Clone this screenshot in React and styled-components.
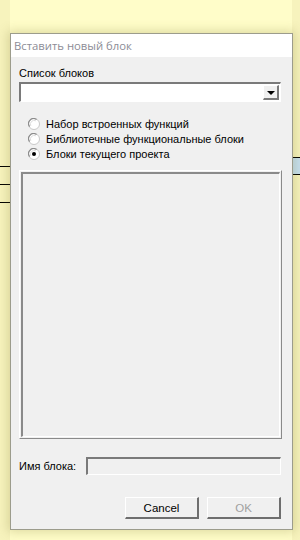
import React, { useState } from "react";
import styled, { createGlobalStyle } from "styled-components";

const GlobalStyle = createGlobalStyle`
  html, body {
    margin: 0;
    padding: 0;
  }
  body {
    width: 300px;
    height: 540px;
    overflow: hidden;
    font-family: "Liberation Sans", Arial, sans-serif;
  }
`;

const options = [
  "Набор встроенных функций",
  "Библиотечные функциональные блоки",
  "Блоки текущего проекта",
];

function Radio({ checked }) {
  return (
    <svg width="12" height="12" viewBox="0 0 12 12">
      <circle cx="6" cy="6" r="5.5" fill="#fff" stroke="#c8c8c8" strokeWidth="1" />
      <path d="M1.6 8.6 A5 5 0 0 1 8.6 1.6" fill="none" stroke="#8c8c8c" strokeWidth="1.2" />
      <path d="M2.8 7.9 A3.8 3.8 0 0 1 7.9 2.8" fill="none" stroke="#dcdcdc" strokeWidth="1" />
      {checked && <circle cx="6" cy="6" r="2" fill="#000" />}
    </svg>
  );
}

function App() {
  const [choice, setChoice] = useState(2);

  return (
    <>
      <GlobalStyle />
      <S.Page>
        <S.LeftStrip>
          <S.Rule />
          <S.Rule />
          <S.Rule />
        </S.LeftStrip>
        <S.RightStrip>
          <S.Band />
        </S.RightStrip>

        <S.Dialog>
          <S.TitleBar>Вставить новый блок</S.TitleBar>
          <S.Body>
            <S.Label>Список блоков</S.Label>
            <S.Combo>
              <S.ComboField />
              <S.ComboButton>
                <S.Arrow />
              </S.ComboButton>
            </S.Combo>

            <S.RadioGroup>
              {options.map((text, i) => (
                <S.RadioRow key={text} onClick={() => setChoice(i)}>
                  <Radio checked={choice === i} />
                  <span>{text}</span>
                </S.RadioRow>
              ))}
            </S.RadioGroup>

            <S.ListBox>
              <S.ListInner />
            </S.ListBox>

            <S.NameRow>
              <S.Label>Имя блока:</S.Label>
              <S.NameInput />
            </S.NameRow>

            <S.Buttons>
              <S.Button>Cancel</S.Button>
              <S.Button disabled>OK</S.Button>
            </S.Buttons>
          </S.Body>
        </S.Dialog>
      </S.Page>
    </>
  );
}

const S = {
  Page: styled.div`
    position: relative;
    width: 300px;
    height: 540px;
    background: #fffdc9;
    display: flex;
    justify-content: space-between;
  `,
  LeftStrip: styled.div`
    width: 10px;
    background: #f7f3bd;
    padding-top: 166px;
    display: flex;
    flex-direction: column;
    gap: 17px;
  `,
  Rule: styled.div`
    height: 1px;
    background: #000;
  `,
  RightStrip: styled.div`
    width: 8px;
    background: #f7f3bd;
    padding-top: 157px;
  `,
  Band: styled.div`
    height: 16px;
    background: #c6dfef;
    border-top: 1px solid #000;
    border-bottom: 1px solid #000;
  `,
  Dialog: styled.div`
    position: absolute;
    top: 33px;
    left: 10px;
    width: 281px;
    height: 495px;
    border: 1px solid #9c9c8c;
    background: #f0f0f0;
    box-shadow: 0 0 10px 2px rgba(120, 110, 40, 0.25);
    display: flex;
    flex-direction: column;
  `,
  TitleBar: styled.div`
    height: 23px;
    background: #fff;
    color: #8c8c96;
    font-family: "Open Sans", "Noto Sans", sans-serif;
    font-size: 11.3px;
    line-height: 23px;
    padding-left: 3px;
  `,
  Body: styled.div`
    flex: 1;
    padding: 9px 11px 0 8px;
    display: flex;
    flex-direction: column;
    font-size: 11px;
    color: #000;
  `,
  Label: styled.div`
    font-size: 11px;
    line-height: 14px;
    white-space: nowrap;
  `,
  Combo: styled.div`
    margin-top: 2px;
    height: 20px;
    display: flex;
    box-sizing: border-box;
    border-style: solid;
    border-width: 2px 1px 1px 2px;
    border-color: #7a7a7a #fff #fff #7a7a7a;
    background: #fff;
    padding: 1px 1px 1px 0;
  `,
  ComboField: styled.div`
    flex: 1;
  `,
  ComboButton: styled.div`
    width: 16px;
    box-sizing: border-box;
    background: #f0f0f0;
    border-style: solid;
    border-width: 1px 2px 2px 1px;
    border-color: #fff #7a7a7a #7a7a7a #fff;
    display: flex;
    align-items: center;
    justify-content: center;
  `,
  Arrow: styled.div`
    width: 0;
    height: 0;
    border-left: 4px solid transparent;
    border-right: 4px solid transparent;
    border-top: 4px solid #000;
    margin-top: 1px;
  `,
  RadioGroup: styled.div`
    margin-top: 14px;
    padding-left: 9px;
    display: flex;
    flex-direction: column;
  `,
  RadioRow: styled.label`
    height: 15px;
    display: flex;
    align-items: center;
    gap: 6px;
    cursor: default;
    white-space: nowrap;
  `,
  ListBox: styled.div`
    margin-top: 9px;
    height: 269px;
    margin-right: -1px;
    box-sizing: border-box;
    border-style: solid;
    border-width: 1px;
    border-color: #fff #8a8a8a #8a8a8a #fff;
    display: flex;
  `,
  ListInner: styled.div`
    flex: 1;
    margin: 1px;
    border-style: solid;
    border-width: 2px 1px 1px 2px;
    border-color: #8a8a8a #fff #fff #8a8a8a;
    background: #f0f0f0;
  `,
  NameRow: styled.div`
    margin-top: 18px;
    display: flex;
    align-items: center;
    justify-content: space-between;
  `,
  NameInput: styled.div`
    width: 195px;
    height: 18px;
    box-sizing: border-box;
    border-style: solid;
    border-width: 2px 1px 1px 2px;
    border-color: #7a7a7a #fff #fff #7a7a7a;
    background: #f0f0f0;
  `,
  Buttons: styled.div`
    margin-top: 22px;
    display: flex;
    justify-content: flex-end;
    gap: 8px;
  `,
  Button: styled.button`
    width: 74px;
    height: 22px;
    box-sizing: border-box;
    padding: 0;
    font-family: "Liberation Sans", Arial, sans-serif;
    font-size: 11.5px;
    color: ${({ disabled }) => (disabled ? "#a0a0a0" : "#000")};
    background: #f0f0f0;
    border-style: solid;
    border-width: 1px 2px 2px 1px;
    border-color: #fff #6e6e6e #6e6e6e #fff;
    border-radius: 0;
    outline: none;
  `,
};

export default App;
